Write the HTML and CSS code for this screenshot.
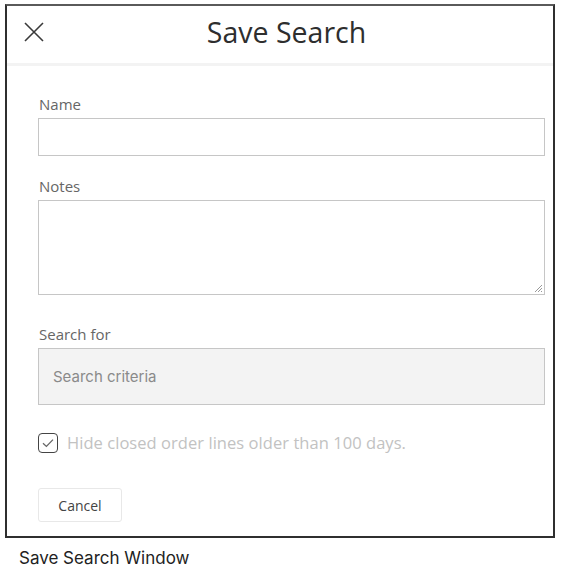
FILE: index.html
```html
<!DOCTYPE html>
<html>
<head>
<meta charset="utf-8">
<link rel="stylesheet" href="styles.css">
</head>
<body>
<div class="dialog">
  <div class="header">
    <button class="close" aria-label="Close">
      <svg width="20" height="20" viewBox="0 0 20 20"><path d="M1 1L19 19M19 1L1 19" stroke="#3a3a3a" stroke-width="1.6" fill="none"/></svg>
    </button>
    <div class="title">Save Search</div>
  </div>
  <div class="body">
    <label class="label">Name</label>
    <div class="input"></div>
    <label class="label notes-label">Notes</label>
    <div class="textarea">
      <svg class="grip" width="10" height="10" viewBox="0 0 10 10"><path d="M9 2L2 9M9 5L5 9M9 8L8 9" stroke="#999" stroke-width="1" fill="none"/></svg>
    </div>
    <label class="label search-label">Search for</label>
    <div class="criteria">Search criteria</div>
    <div class="check-row">
      <span class="checkbox">
        <svg width="18" height="18" viewBox="0 0 18 18"><path d="M4 9.2L7.4 12.4L14 5.6" stroke="#666" stroke-width="1.3" fill="none"/></svg>
      </span>
      <span class="check-text">Hide closed order lines older than 100 days.</span>
    </div>
    <button class="cancel">Cancel</button>
  </div>
</div>
<div class="caption">Save Search Window</div>
</body>
</html>
```
FILE: styles.css
```css
html, body { margin: 0; padding: 0; background: #fff; }
body { font-family: "Open Sans", "Noto Sans", sans-serif; }
.dialog {
  margin: 4px 0 0 5px;
  width: 546px;
  height: 530px;
  border: 2px solid #2f2f2f;
  border-top-color: #5a5a5a;
  box-sizing: content-box;
  display: flex;
  flex-direction: column;
}
.header {
  height: 57px;
  display: flex;
  align-items: center;
  border-bottom: 3px solid #f3f3f3;
}
.close {
  margin-left: 17px;
  width: 20px; height: 20px;
  padding: 0; border: 0; background: none;
  display: flex;
  margin-top: -6px;
}
.title {
  flex: 1;
  text-align: center;
  margin-right: 24px;
  font-size: 28.5px;
  line-height: 36px;
  color: #2e2e2e;
  margin-top: -5px;
}
.body {
  padding: 28px 8px 0 31px;
  display: flex;
  flex-direction: column;
  align-items: flex-start;
}
.label {
  font-size: 15px;
  line-height: 20px;
  color: #666;
  margin-left: 1px;
  margin-bottom: 4px;
}
.notes-label { margin-top: 20px; }
.search-label { margin-top: 29px; margin-bottom: 4px; }
.input {
  width: 507px;
  height: 38px;
  box-sizing: border-box;
  border: 1px solid #c6c6c6;
  background: #fff;
}
.textarea {
  position: relative;
  width: 507px;
  height: 95px;
  box-sizing: border-box;
  border: 1px solid #c6c6c6;
  background: #fff;
}
.grip { position: absolute; right: 1px; bottom: 1px; }
.criteria {
  width: 507px;
  height: 57px;
  box-sizing: border-box;
  border: 1px solid #c6c6c6;
  background: #f3f3f3;
  padding-left: 14px;
  display: flex;
  align-items: center;
  font-family: Inter, Roboto, sans-serif;
  font-size: 15px;
  color: #8a8a8a;
}
.check-row {
  margin-top: 28px;
  display: flex;
  align-items: center;
  gap: 9px;
}
.checkbox {
  width: 20px; height: 20px;
  box-sizing: border-box;
  border: 1.5px solid #444;
  border-radius: 4px;
  display: flex;
  align-items: center;
  justify-content: center;
}
.check-text {
  font-size: 16.5px;
  line-height: 20px;
  color: #c2c2c2;
  letter-spacing: 0.05px;
}
.cancel {
  margin-top: 35px;
  width: 84px; height: 34px;
  border: 1px solid #e8e8e8;
  border-radius: 3px;
  background: #fff;
  font-family: "Open Sans", sans-serif;
  font-size: 14px;
  color: #444;
  padding: 0;
}
.caption {
  margin: 10px 0 0 19px;
  font-family: Inter, Roboto, sans-serif;
  font-size: 17px;
  line-height: 20px;
  color: #222;
}
```
